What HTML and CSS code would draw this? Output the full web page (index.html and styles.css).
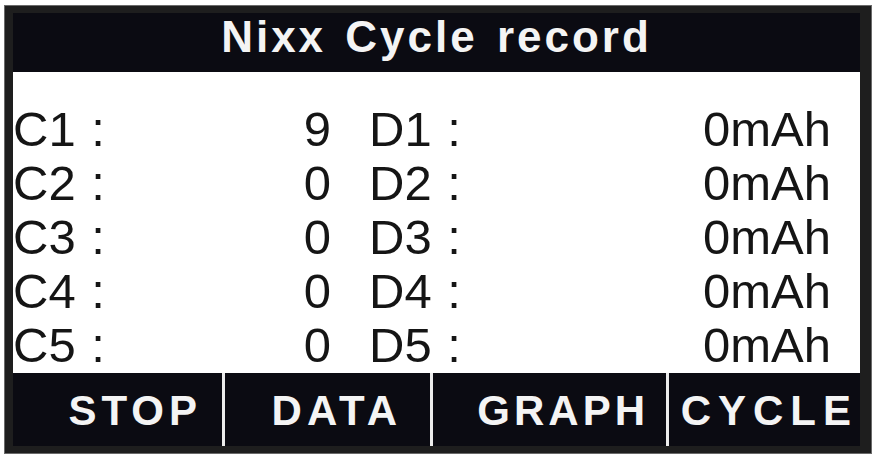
FILE: index.html
```html
<!DOCTYPE html>
<html>
<head>
<meta charset="utf-8">
<link rel="stylesheet" href="styles.css">
</head>
<body>
<div class="device">
  <div class="screen">
    <div class="title">Nixx Cycle record</div>
    <div class="records">
      <div class="cell"><span class="lbl">C1 :</span><span>9</span></div>
      <div class="cell"><span class="lbl">D1 :</span><span>0mAh</span></div>
      <div class="cell"><span class="lbl">C2 :</span><span>0</span></div>
      <div class="cell"><span class="lbl">D2 :</span><span>0mAh</span></div>
      <div class="cell"><span class="lbl">C3 :</span><span>0</span></div>
      <div class="cell"><span class="lbl">D3 :</span><span>0mAh</span></div>
      <div class="cell"><span class="lbl">C4 :</span><span>0</span></div>
      <div class="cell"><span class="lbl">D4 :</span><span>0mAh</span></div>
      <div class="cell"><span class="lbl">C5 :</span><span>0</span></div>
      <div class="cell"><span class="lbl">D5 :</span><span>0mAh</span></div>
    </div>
    <div class="softkeys">
      <div class="key key-stop">STOP</div>
      <div class="key key-data">DATA</div>
      <div class="key key-graph">GRAPH</div>
      <div class="key key-cycle">CYCLE</div>
    </div>
  </div>
</div>
</body>
</html>
```
FILE: styles.css
```css
html, body {
  margin: 0;
  padding: 0;
  background: #ffffff;
}

body {
  font-family: "Liberation Sans", Arial, sans-serif;
  width: 876px;
  height: 459px;
  overflow: hidden;
}

.device {
  margin: 6px 0 0 5px;
  width: 866px;
  height: 447px;
  box-sizing: border-box;
  padding: 7px 11px 7px 8px;
  background: #1e1e1e;
  box-shadow: 0 0 0 1px #6a6a6a;
}

.screen {
  display: flex;
  flex-direction: column;
  width: 847px;
  height: 433px;
  background: #ffffff;
}

.title {
  height: 59px;
  box-sizing: border-box;
  padding-bottom: 11px;
  background: #0b0b12;
  color: #f4f4f4;
  font-weight: bold;
  font-size: 44px;
  line-height: 48px;
  letter-spacing: 3px;
  word-spacing: 4px;
  text-align: center;
}

.records {
  flex: 1;
  box-sizing: border-box;
  padding: 30px 29px 0 0;
  display: grid;
  grid-template-columns: 318px 462px;
  column-gap: 38px;
  grid-auto-rows: 54px;
  color: #151515;
  font-size: 49px;
  line-height: 54px;
}

.cell {
  display: flex;
  justify-content: space-between;
  white-space: nowrap;
}

.lbl {
  word-spacing: 2px;
}

.softkeys {
  height: 73px;
  display: grid;
  grid-template-columns: 209px 208px 236px 194px;
  background: #0b0b12;
  color: #f4f4f4;
  font-weight: bold;
  font-size: 42px;
  line-height: 70px;
}

.key {
  box-sizing: border-box;
  padding-top: 3px;
  text-align: right;
  letter-spacing: 5px;
  white-space: nowrap;
}

.key + .key {
  border-left: 3px solid #ececec;
}

.key-stop { padding-right: 20px; }
.key-data { padding-right: 28px; }
.key-graph { padding-right: 17px; letter-spacing: 4px; }
.key-cycle { padding-right: 2px; letter-spacing: 7px; }
```
